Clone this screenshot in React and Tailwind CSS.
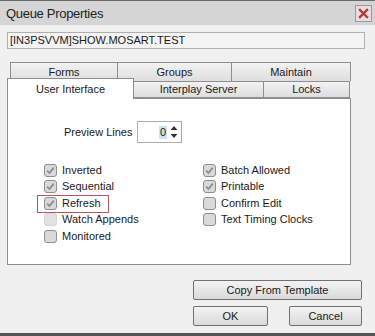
import React from 'react';

const font = { fontFamily: '"Liberation Sans", Arial, sans-serif' };

function Check({ label, checked, faded, highlight }) {
    return (
        <div className="relative flex items-center h-[16.5px] gap-[5px]">
            {highlight && (
                <span className="absolute left-[-7px] top-[-0.5px] w-[72px] h-[18px] border border-[#b5565a]" />
            )}
            <span
                className={`w-[13px] h-[13px] rounded-[3px] border flex items-center justify-center ${
                    faded ? 'border-[#d4d4d4] bg-[#e2e2e2]' : 'border-[#8f8f8f] bg-[#d9d9d9]'
                }`}
            >
                {checked && (
                    <svg width="9" height="9" viewBox="0 0 9 9">
                        <polyline points="1.2,4.6 3.5,7 7.8,1.6" fill="none" stroke="#8c8c8c" strokeWidth="1.8" />
                    </svg>
                )}
            </span>
            <span className="text-[11px] font-normal text-[#1a1a1a] leading-none whitespace-nowrap">{label}</span>
        </div>
    );
}

function Btn({ children, className }) {
    return (
        <button
            className={`h-[20px] border border-[#707070] rounded-[2px] bg-gradient-to-b from-[#f3f3f3] to-[#dadada] text-[11px] font-normal text-[#1a1a1a] flex items-center justify-center ${className}`}
        >
            {children}
        </button>
    );
}

export default function App() {
    const tabTop = ['Forms', 'Groups', 'Maintain'];

    return (
        <div
            className="w-[375px] h-[336px] bg-[#f0f0f0] flex flex-col border-t border-t-[#6a6a6a] border-b-[3px] border-b-[#555555] overflow-hidden font-normal"
            style={font}
        >
            {/* Title bar */}
            <div className="h-[24px] bg-[#d5d5d5] flex items-center justify-between pl-[6px] pr-[3px]">
                <span className="text-[13px] text-[#222] tracking-[-0.3px] pt-[2px]">Queue Properties</span>
                <span className="w-[17px] h-[17px] border border-[#9a9a9a] bg-[#e6dede] flex items-center justify-center">
                    <svg width="11" height="11" viewBox="0 0 11 11">
                        <path d="M2 2 L9 9 M9 2 L2 9" stroke="#b8383b" strokeWidth="2.4" strokeLinecap="square" />
                    </svg>
                </span>
            </div>

            <div className="px-[7px] pt-[7px] flex flex-col">
                {/* Queue name field */}
                <div className="w-[358px] h-[17px] border border-[#b0b0b0] bg-[#f4f4f4] flex items-center pl-[2px] text-[11px] text-[#1a1a1a]">
                    [IN3PSVVM]SHOW.MOSART.TEST
                </div>

                {/* Tabs row 1 */}
                <div className="ml-[3px] mt-[13px] w-[341px] h-[19px] flex">
                    {tabTop.map((t, i) => (
                        <div
                            key={t}
                            className={`${i === 0 ? 'w-[108px]' : 'w-[114px]'} ${i === 2 ? 'flex-1' : ''} border border-[#8c8e94] ${
                                i > 0 ? 'border-l-0' : ''
                            } border-b-0 bg-gradient-to-b from-[#f2f2f2] to-[#dedede] flex items-center justify-center text-[11px] text-[#1a1a1a]`}
                        >
                            {t}
                        </div>
                    ))}
                </div>

                {/* Tabs row 2 */}
                <div className="w-[344px] h-[17px] flex items-end">
                    <div className="relative z-10 w-[127px] h-[21px] -mb-px bg-white border border-[#8c8e94] border-b-0 flex items-start justify-center pt-[2px] text-[11px] text-[#1a1a1a]">
                        User Interface
                    </div>
                    <div className="w-[130px] h-[17px] border border-[#8c8e94] border-l-0 bg-gradient-to-b from-[#f2f2f2] to-[#dedede] flex items-center justify-center text-[11px] text-[#1a1a1a]">
                        Interplay Server
                    </div>
                    <div className="w-[86px] h-[17px] border border-[#8c8e94] border-l-0 bg-gradient-to-b from-[#f2f2f2] to-[#dedede] flex items-center justify-center text-[11px] text-[#1a1a1a]">
                        Locks
                    </div>
                </div>

                {/* Panel */}
                <div className="w-[344px] h-[167px] bg-white border border-[#8c8e94] flex flex-col">
                    <div className="flex items-center mt-[22px] ml-[56px] gap-[8px]">
                        <span className="text-[11px] text-[#1a1a1a] whitespace-nowrap w-[65px]">Preview Lines</span>
                        <div className="w-[45px] h-[22px] border border-[#abadb3] flex items-center justify-end pr-[3px] gap-[3px]">
                            <span className="text-[11px] text-[#1a1a1a] bg-[#cfe3f7] px-[1px] leading-[13px]">0</span>
                            <svg width="8" height="14" viewBox="0 0 8 14">
                                <path d="M4 1 L7.5 5 L0.5 5 Z" fill="#333" />
                                <path d="M4 13 L7.5 9 L0.5 9 Z" fill="#333" />
                            </svg>
                        </div>
                    </div>

                    <div className="flex ml-[36px] mt-[19px]">
                        <div className="w-[159px] flex flex-col">
                            <Check label="Inverted" checked />
                            <Check label="Sequential" checked />
                            <Check label="Refresh" checked highlight />
                            <Check label="Watch Appends" faded />
                            <Check label="Monitored" />
                        </div>
                        <div className="flex flex-col">
                            <Check label="Batch Allowed" checked />
                            <Check label="Printable" checked />
                            <Check label="Confirm Edit" />
                            <Check label="Text Timing Clocks" />
                        </div>
                    </div>
                </div>

                {/* Buttons */}
                <div className="ml-[186px] mt-[15px] flex flex-col gap-[6px] w-[169px]">
                    <Btn className="w-[169px]">Copy From Template</Btn>
                    <div className="flex justify-between">
                        <Btn className="w-[75px]">OK</Btn>
                        <Btn className="w-[73px]">Cancel</Btn>
                    </div>
                </div>
            </div>
        </div>
    );
}
